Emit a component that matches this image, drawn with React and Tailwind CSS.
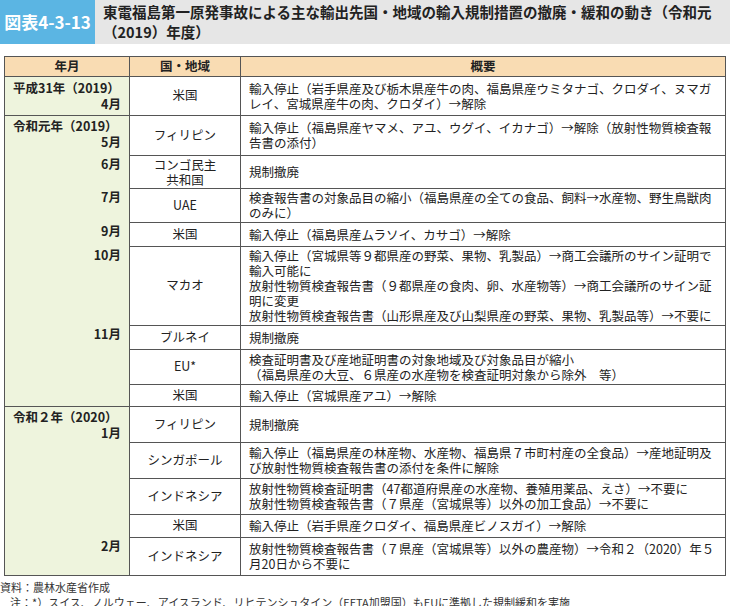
import React from "react";

const B = "border border-[#555]";

const Cty = ({ children, h }) => (
  <td className={`${B} text-center align-middle`} style={{ height: h }}>{children}</td>
);
const Sum = ({ children }) => (
  <td className={`${B} px-[8px] leading-[15px] align-middle`}>{children}</td>
);

export default function App() {
  const yc = `border-x border-[#555] bg-[#eef4dd] px-[8px] align-top`;
  return (
    <div className="w-[730px] h-[606px] bg-white text-[#222] text-[12.5px]" style={{ fontFamily: '"Noto Sans CJK JP", "Noto Sans", sans-serif' }}>
      <div className="flex h-[44px]">
        <div className="w-[95px] bg-[#5bb5e3] text-white text-[17px] font-bold flex items-center justify-center whitespace-nowrap">図表4-3-13</div>
        <div className="flex-1 bg-[#e6e6e6] px-[8px] pt-[2px] text-[14.5px] font-bold leading-[20px]">東電福島第一原発事故による主な輸出先国・地域の輸入規制措置の撤廃・緩和の動き（令和元（2019）年度）</div>
      </div>
      <table className="mt-[12px] ml-[4px] w-[722px] border-collapse">
        <colgroup><col className="w-[125px]" /><col className="w-[111px]" /><col /></colgroup>
        <thead>
          <tr className="h-[18px] bg-[#f9dcb3] font-bold">
            <td className={`${B} text-center`}>年月</td>
            <td className={`${B} text-center`}>国・地域</td>
            <td className={`${B} text-center`}>概要</td>
          </tr>
        </thead>
        <tbody>
          <tr>
            <td className={`${B} bg-[#eef4dd] px-[8px] leading-[16px] font-bold`}>平成31年（2019）<div className="text-right">4月</div></td>
            <Cty h={39}>米国</Cty>
            <Sum>輸入停止（岩手県産及び栃木県産牛の肉、福島県産ウミタナゴ、クロダイ、ヌマガレイ、宮城県産牛の肉、クロダイ）→解除</Sum>
          </tr>
          <tr>
            <td className={`${yc} border-t font-bold leading-[16px] pt-[2px]`}>令和元年（2019）<div className="text-right">5月</div></td>
            <Cty h={40}>フィリピン</Cty>
            <Sum>輸入停止（福島県産ヤマメ、アユ、ウグイ、イカナゴ）→解除（放射性物質検査報告書の添付）</Sum>
          </tr>
          <tr>
            <td className={`${yc} text-right align-middle font-bold`}>6月</td>
            <Cty h={33}><div className="leading-[15px]">コンゴ民主<br />共和国</div></Cty>
            <Sum>規制撤廃</Sum>
          </tr>
          <tr>
            <td className={`${yc} text-right align-middle font-bold`}>7月</td>
            <Cty h={34}>UAE</Cty>
            <Sum>検査報告書の対象品目の縮小（福島県産の全ての食品、飼料→水産物、野生鳥獣肉のみに）</Sum>
          </tr>
          <tr>
            <td className={`${yc} text-right align-middle font-bold`}>9月</td>
            <Cty h={24}>米国</Cty>
            <Sum>輸入停止（福島県産ムラソイ、カサゴ）→解除</Sum>
          </tr>
          <tr>
            <td className={`${yc} text-right align-middle font-bold`}>10月</td>
            <Cty h={79}>マカオ</Cty>
            <Sum>輸入停止（宮城県等９都県産の野菜、果物、乳製品）→商工会議所のサイン証明で輸入可能に<br />放射性物質検査報告書（９都県産の食肉、卵、水産物等）→商工会議所のサイン証明に変更<br />放射性物質検査報告書（山形県産及び山梨県産の野菜、果物、乳製品等）→不要に</Sum>
          </tr>
          <tr>
            <td rowSpan={3} className={`${yc} text-right align-middle font-bold`}>11月</td>
            <Cty h={24}>ブルネイ</Cty>
            <Sum>規制撤廃</Sum>
          </tr>
          <tr>
            <Cty h={35}>EU*</Cty>
            <Sum>検査証明書及び産地証明書の対象地域及び対象品目が縮小<br />（福島県産の大豆、６県産の水産物を検査証明対象から除外　等）</Sum>
          </tr>
          <tr>
            <Cty h={22}>米国</Cty>
            <Sum>輸入停止（宮城県産アユ）→解除</Sum>
          </tr>
          <tr>
            <td rowSpan={4} className={`${yc} border-t font-bold leading-[16px] pt-[2px]`}>令和２年（2020）<div className="text-right">1月</div></td>
            <Cty h={36}>フィリピン</Cty>
            <Sum>規制撤廃</Sum>
          </tr>
          <tr>
            <Cty h={36}>シンガポール</Cty>
            <Sum>輸入停止（福島県産の林産物、水産物、福島県７市町村産の全食品）→産地証明及び放射性物質検査報告書の添付を条件に解除</Sum>
          </tr>
          <tr>
            <Cty h={36}>インドネシア</Cty>
            <Sum>放射性物質検査証明書（47都道府県産の水産物、養殖用薬品、えさ）→不要に<br />放射性物質検査報告書（７県産（宮城県等）以外の加工食品）→不要に</Sum>
          </tr>
          <tr>
            <Cty h={23}>米国</Cty>
            <Sum>輸入停止（岩手県産クロダイ、福島県産ビノスガイ）→解除</Sum>
          </tr>
          <tr>
            <td className={`${yc} border-b text-right align-middle font-bold`}>2月</td>
            <Cty h={38}>インドネシア</Cty>
            <Sum>放射性物質検査報告書（７県産（宮城県等）以外の農産物）→令和２（2020）年５月20日から不要に</Sum>
          </tr>
        </tbody>
      </table>
      <div className="mt-[4px] text-[11px] leading-[15px] text-[#333]">
        <div>資料：農林水産省作成</div>
        <div className="pl-[10px]">注：*）スイス、ノルウェー、アイスランド、リヒテンシュタイン（EFTA加盟国）もEUに準拠した規制緩和を実施</div>
      </div>
    </div>
  );
}
